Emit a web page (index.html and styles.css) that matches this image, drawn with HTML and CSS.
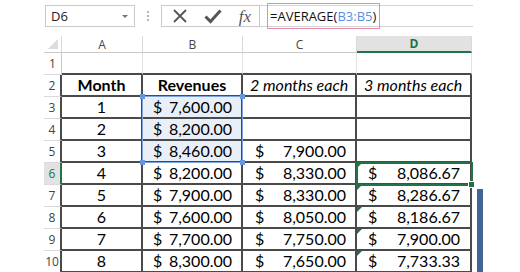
FILE: index.html
```html
<!DOCTYPE html>
<html lang="en">
<head>
  <meta charset="UTF-8" />
  <title>Moving average</title>
  <link rel="stylesheet" href="styles.css">
</head>
<body>

  <div class="bar">
    <div class="namebox">
      <span>D6</span>
      <span class="caret"></span>
    </div>
    <div class="grip"><i></i><i></i><i></i></div>
    <div class="btns">
      <svg width="16" height="16" viewBox="0 0 16 16"><path d="M2 2 L14 14 M14 2 L2 14" stroke="#555" stroke-width="1.8" fill="none"/></svg>
      <svg width="18" height="16" viewBox="0 0 18 16"><path d="M1.5 8.5 L6.5 13.5 L16.5 2.5" stroke="#555" stroke-width="3" fill="none"/></svg>
      <span class="fx">fx</span>
    </div>
    <div class="formula">
      <span class="edit">=AVERAGE(<span class="ref">B3:B5</span>)</span>
    </div>
  </div>

  <div class="sheet">
    <!-- column headings -->
    <div class="corner"><span></span></div>
    <div class="col">A</div>
    <div class="col">B</div>
    <div class="col">C</div>
    <div class="col on">D</div>

    <!-- row 1 -->
    <div class="rh">1</div>
    <div class="c top"></div>
    <div class="c top"></div>
    <div class="c top"></div>
    <div class="c top"></div>

    <!-- row 2 -->
    <div class="rh edge">2</div>
    <div class="t hd">Month</div>
    <div class="t hd">Revenues</div>
    <div class="t it">2 months each</div>
    <div class="t it">3 months each</div>

    <div class="rh edge">3</div>
    <div class="t mid">1</div>
    <div class="t num pick b"><span>$</span><span>7,600.00</span></div>
    <div class="t"></div>
    <div class="t"></div>

    <div class="rh edge">4</div>
    <div class="t mid">2</div>
    <div class="t num pick b"><span>$</span><span>8,200.00</span></div>
    <div class="t"></div>
    <div class="t"></div>

    <div class="rh edge">5</div>
    <div class="t mid">3</div>
    <div class="t num pick b"><span>$</span><span>8,460.00</span></div>
    <div class="t num c3"><span>$</span><span>7,900.00</span></div>
    <div class="t"></div>

    <div class="rh edge on">6</div>
    <div class="t mid">4</div>
    <div class="t num b"><span>$</span><span>8,200.00</span></div>
    <div class="t num c3"><span>$</span><span>8,330.00</span></div>
    <div class="t num d flag"><span>$</span><span>8,086.67</span></div>

    <div class="rh edge">7</div>
    <div class="t mid">5</div>
    <div class="t num b"><span>$</span><span>7,900.00</span></div>
    <div class="t num c3"><span>$</span><span>8,330.00</span></div>
    <div class="t num d flag"><span>$</span><span>8,286.67</span></div>

    <div class="rh edge">8</div>
    <div class="t mid">6</div>
    <div class="t num b"><span>$</span><span>7,600.00</span></div>
    <div class="t num c3"><span>$</span><span>8,050.00</span></div>
    <div class="t num d flag"><span>$</span><span>8,186.67</span></div>

    <div class="rh edge">9</div>
    <div class="t mid">7</div>
    <div class="t num b"><span>$</span><span>7,700.00</span></div>
    <div class="t num c3"><span>$</span><span>7,750.00</span></div>
    <div class="t num d flag"><span>$</span><span>7,900.00</span></div>

    <div class="rh edge">10</div>
    <div class="t mid">8</div>
    <div class="t num b"><span>$</span><span>8,300.00</span></div>
    <div class="t num c3"><span>$</span><span>7,650.00</span></div>
    <div class="t num d flag"><span>$</span><span>7,733.33</span></div>

    <!-- overlays -->
    <div class="sel">
      <i class="h tl"></i><i class="h tr"></i><i class="h bl"></i><i class="h br"></i>
    </div>
    <div class="active"><i class="fill"></i></div>
    <div class="scroll"></div>
  </div>

</body>
</html>
```

FILE: styles.css
```css
body {
  margin: 0;
  background: #fff;
  font-family: Lato, "Liberation Sans", sans-serif;
  width: 520px;
  height: 272px;
  overflow: hidden;
}

/* formula bar */
.bar {
  display: flex;
  align-items: center;
  height: 36px;
  padding-left: 45px;
  box-sizing: border-box;
  padding-bottom: 4px;
  font-family: "Open Sans", "Noto Sans", sans-serif;
}

.namebox {
  width: 90px;
  height: 22px;
  box-sizing: border-box;
  border: 1px solid #c9c9c9;
  display: flex;
  align-items: center;
  justify-content: space-between;
  padding: 0 6px 0 5px;
  font-size: 13px;
  color: #222;
}

.caret {
  width: 0;
  height: 0;
  border-left: 3px solid transparent;
  border-right: 3px solid transparent;
  border-top: 3px solid #777;
}

.grip {
  width: 26px;
  display: flex;
  flex-direction: column;
  align-items: center;
  gap: 2px;
}

.grip i {
  width: 2px;
  height: 2px;
  background: #b5b5b5;
}

.btns {
  width: 99px;
  height: 22px;
  box-sizing: border-box;
  border: 1px solid #c9c9c9;
  display: flex;
  align-items: center;
  justify-content: space-between;
  padding: 0 8px 0 10px;
}

.fx {
  font-family: "Liberation Serif", serif;
  font-style: italic;
  font-size: 17px;
  color: #555;
  line-height: 1;
}

.formula {
  width: 213px;
  height: 22px;
  box-sizing: border-box;
  border-top: 1px solid #d4d4d4;
  border-bottom: 1px solid #d4d4d4;
  display: flex;
  align-items: center;
  padding-left: 7px;
}

.edit {
  border: 1px solid #e58db0;
  height: 26px;
  box-sizing: border-box;
  display: flex;
  align-items: center;
  padding: 0 3px 0 2px;
  font-size: 13px;
  color: #111;
}

.ref {
  color: #5a8fdc;
}

/* sheet grid */
.sheet {
  position: relative;
  margin-left: 44px;
  display: grid;
  grid-template-columns: 18px 81px 100px 114px 115px;
  grid-template-rows: 17px repeat(10, 22px);
  font-size: 16px;
}

.sheet > div {
  box-sizing: border-box;
}

.corner {
  border-right: 1px solid #dadada;
  border-bottom: 1px solid #c9c9c9;
  position: relative;
}

.corner span {
  position: absolute;
  right: 3px;
  bottom: 3px;
  width: 0;
  height: 0;
  border-left: 10px solid transparent;
  border-bottom: 10px solid #dcdcdc;
}

.col {
  border-right: 1px solid #dadada;
  border-bottom: 1px solid #c9c9c9;
  font-family: "Open Sans", "Noto Sans", sans-serif;
  font-size: 12px;
  color: #444;
  display: flex;
  align-items: center;
  justify-content: center;
}

.col.on {
  background: #e2e2e2;
  color: #217346;
  font-weight: bold;
  border-bottom: 2px solid #217346;
}

.rh {
  border-right: 1px solid #c9c9c9;
  border-bottom: 1px solid #dadada;
  font-family: "Open Sans", "Noto Sans", sans-serif;
  font-size: 12px;
  color: #444;
  display: flex;
  align-items: center;
  justify-content: center;
}

.rh.edge {
  border-right: 2px solid #4a4a4a;
}

.rh.on {
  background: #e2e2e2;
  color: #217346;
  border-right: 2px solid #217346;
}

.c {
  border-right: 1px solid #e2e2e2;
  border-bottom: 1px solid #e2e2e2;
}

.c.top {
  border-bottom: 2px solid #4a4a4a;
}

.t {
  border-right: 2px solid #4a4a4a;
  border-bottom: 2px solid #4a4a4a;
  color: #000;
  line-height: 20px;
  position: relative;
}

.hd {
  font-weight: bold;
  text-align: center;
}

.it {
  font-style: italic;
  padding-left: 7px;
}

.mid {
  text-align: center;
}

.num {
  display: flex;
  justify-content: space-between;
}

.num.b {
  padding: 0 9px 0 10px;
}

.num.c3 {
  padding: 0 9px 0 12px;
}

.num.d {
  padding: 0 10px 0 11px;
}

.pick {
  background: #e9eff9;
}

/* green error markers */
.flag::before {
  content: "";
  position: absolute;
  left: 0;
  top: 0;
  border-top: 5px solid #217346;
  border-right: 5px solid transparent;
}

/* selection B3:B5 */
.sel {
  position: absolute;
  left: 98px;
  top: 60px;
  width: 101px;
  height: 67px;
  box-sizing: border-box;
  border: 1px solid #7ea3dd;
}

.h {
  position: absolute;
  width: 5px;
  height: 5px;
  background: #6a97dc;
}

.tl { left: -3px; top: -3px; }
.tr { right: -3px; top: -3px; }
.bl { left: -3px; bottom: -3px; }
.br { right: -3px; bottom: -3px; }

/* active cell D6 */
.active {
  position: absolute;
  left: 312px;
  top: 126px;
  width: 117px;
  height: 24px;
  box-sizing: border-box;
  border: 2px solid #217346;
}

.fill {
  position: absolute;
  right: -4px;
  bottom: -4px;
  width: 5px;
  height: 5px;
  background: #217346;
  border: 1px solid #fff;
}

.scroll {
  position: absolute;
  left: 433px;
  top: 153px;
  width: 6px;
  height: 100px;
  background: #416595;
}
```
